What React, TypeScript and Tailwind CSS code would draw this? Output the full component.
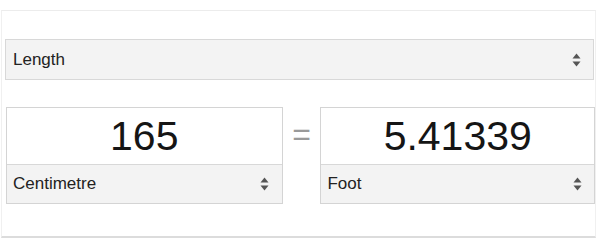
import React from "react";

function Arrows() {
  return (
    <svg width="9" height="14" viewBox="0 0 9 14" className="shrink-0">
      <path d="M4.5 0.5 L8.5 5.5 L0.5 5.5 Z" fill="#555" />
      <path d="M4.5 13.5 L8.5 8.5 L0.5 8.5 Z" fill="#555" />
    </svg>
  );
}

export default function App() {
  return (
    <div
      className="w-[597px] h-[245px] bg-white pt-[10px]"
      style={{ fontFamily: '"Liberation Sans", Arial, sans-serif' }}
    >
      <div className="ml-[1px] w-[595px] h-[228px] border-t border-x border-t-[#ececec] border-x-[#f0f0f0] border-b-2 border-b-[#dcdcdc] flex flex-col">
        <div className="ml-[3px] mt-[28px] w-[589px] h-[41px] border border-[#d8d8d8] bg-[#f3f3f3] flex items-center justify-between pl-[7px] pr-[12px] text-[17px] text-[#222]">
          <span>Length</span>
          <Arrows />
        </div>
        <div className="mt-[27px] ml-[4px] flex items-start">
          <div className="w-[277px] h-[97px] border border-[#d4d4d4] flex flex-col">
            <div className="h-[56px] flex items-center justify-center text-[41px] text-[#151515] leading-none pt-[1px]">
              165
            </div>
            <div className="flex-1 border-t border-[#d8d8d8] bg-[#f3f3f3] flex items-center justify-between pl-[6px] pr-[13px] text-[17px] text-[#222]">
              <span>Centimetre</span>
              <Arrows />
            </div>
          </div>
          <div className="w-[38px] h-[56px] flex items-center justify-center text-[32px] text-[#9a9a9a] leading-none pb-[3px]">
            =
          </div>
          <div className="w-[275px] h-[97px] border border-[#d4d4d4] flex flex-col">
            <div className="h-[56px] flex items-center justify-center text-[41px] text-[#151515] leading-none pt-[1px]">
              5.41339
            </div>
            <div className="flex-1 border-t border-[#d8d8d8] bg-[#f3f3f3] flex items-center justify-between pl-[6px] pr-[12px] text-[17px] text-[#222]">
              <span>Foot</span>
              <Arrows />
            </div>
          </div>
        </div>
      </div>
    </div>
  );
}
